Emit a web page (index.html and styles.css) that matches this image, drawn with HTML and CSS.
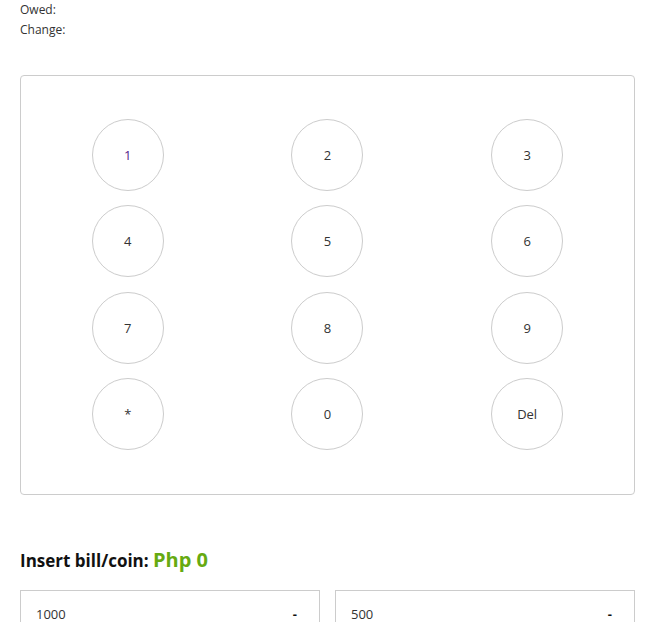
FILE: index.html
```html
<!DOCTYPE html>
<html>
<head>
<meta charset="utf-8">
<link rel="stylesheet" href="styles.css">
</head>
<body>
<div class="page">
  <div class="info">
    <div class="info-row">Owed:</div>
    <div class="info-row">Change:</div>
  </div>
  <div class="keypad">
    <button class="key key-visited">1</button>
    <button class="key">2</button>
    <button class="key">3</button>
    <button class="key">4</button>
    <button class="key">5</button>
    <button class="key">6</button>
    <button class="key">7</button>
    <button class="key">8</button>
    <button class="key">9</button>
    <button class="key">*</button>
    <button class="key">0</button>
    <button class="key">Del</button>
  </div>
  <h2 class="insert-title">Insert bill/coin: <span class="amount">Php 0</span></h2>
  <div class="bills">
    <div class="bill"><span>1000</span><span class="minus">-</span></div>
    <div class="bill"><span>500</span><span class="minus">-</span></div>
    <div class="bill"><span>200</span><span class="minus">-</span></div>
    <div class="bill"><span>100</span><span class="minus">-</span></div>
  </div>
</div>
</body>
</html>
```
FILE: styles.css
```css
html, body {
  margin: 0;
  padding: 0;
  background: #fff;
}
body {
  font-family: "Open Sans", "Noto Sans", sans-serif;
  color: #333;
  font-size: 12px;
}
.page {
  padding: 0 24px 40px 20px;
}
.info-row {
  line-height: 20px;
  height: 20px;
}
.keypad {
  margin-top: 35px;
  border: 1px solid #ccc;
  border-radius: 4px;
  padding: 43px 7px 44px 7px;
  display: grid;
  grid-template-columns: repeat(3, 1fr);
  row-gap: 14.33px;
  justify-items: center;
}
.key {
  width: 72px;
  height: 72px;
  border-radius: 50%;
  border: 1px solid #ccc;
  background: #fff;
  font-family: "Open Sans", "Noto Sans", sans-serif;
  font-size: 13px;
  color: #333;
  padding: 0;
  cursor: pointer;
}
.key-visited {
  color: #551a8b;
}
.insert-title {
  margin: 50px 0 14px;
  font-size: 17px;
  line-height: 30px;
  font-weight: 700;
  color: #111;
}
.amount {
  color: #66aa11;
  font-size: 20px;
}
.bills {
  display: grid;
  grid-template-columns: 1fr 1fr;
  gap: 15px;
}
.bill {
  border: 1px solid #ccc;
  padding: 14px 22px 15px 15px;
  display: flex;
  justify-content: space-between;
  font-size: 13px;
  line-height: 18px;
  color: #333;
}
.minus {
  font-weight: 700;
  color: #111;
}
```
